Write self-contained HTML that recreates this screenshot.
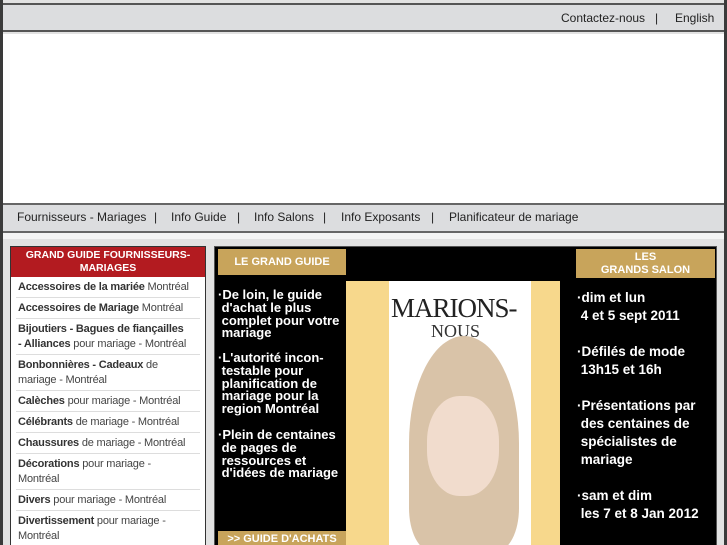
<!DOCTYPE html>
<html><head><meta charset="utf-8"><style>
*{margin:0;padding:0;box-sizing:border-box}
html,body{width:727px;height:545px;overflow:hidden}
body{background:#3a3a3a;font-family:"Liberation Sans",Arial,sans-serif;position:relative}
#page{position:absolute;left:3px;top:0;width:721px;height:545px;background:#e2e2e2;overflow:hidden}
.topline{position:absolute;left:0;top:3px;width:721px;height:2px;background:#555}
.topbar{position:absolute;left:0;top:5px;width:721px;height:27px;background:#dcdddf;border-bottom:2px solid #555;font-size:12px;color:#222}
.topbar span{position:absolute;top:6px}
.banner{position:absolute;left:0;top:34px;width:721px;height:169px;background:#fff}
.nav{position:absolute;left:0;top:203px;width:721px;height:30px;background:#dcdddf;border-top:2px solid #666;border-bottom:2px solid #666;font-size:12px;color:#222}
.nav span{position:absolute;top:5px}
.strip{position:absolute;left:0;top:233px;width:721px;height:6px;background:#f4f4f4}
.left{position:absolute;left:7px;top:246px;width:196px;height:300px;background:#fff;border:1px solid #333}
.lh{background:#b31b20;color:#fff;font-weight:bold;font-size:10.5px;text-align:center;line-height:13px;height:30px;padding-top:2px}
.left ul{list-style:none;padding:0 5px}
.left li{font-size:11px;color:#444;border-bottom:1px solid #ddd;padding:2.5px 0 2.5px 2px;line-height:15px;letter-spacing:-0.2px}
.left b{color:#333}
.right{position:absolute;left:211px;top:246px;width:503px;height:300px;background:#000;border:1px solid #555}
.gold{position:absolute;background:#c8a45b;color:#fff;font-weight:bold;text-align:center}
.txt{position:absolute;color:#fff;font-weight:bold;font-size:13px;line-height:12.8px}
.cover{position:absolute;left:131px;top:34px;width:214px;height:270px;background:#f7d88c}
.cw{position:absolute;left:43px;top:0;width:142px;height:270px;background:#fff}
</style></head><body>
<div id="page">
<div class="topline"></div>
<div class="topbar"><span style="left:558px">Contactez-nous</span><span style="left:652px">|</span><span style="left:672px">English</span></div>
<div class="banner"></div>
<div class="nav"><span style="left:14px">Fournisseurs - Mariages</span><span style="left:151px">|</span><span style="left:168px">Info Guide</span><span style="left:234px">|</span><span style="left:251px">Info Salons</span><span style="left:320px">|</span><span style="left:338px">Info Exposants</span><span style="left:428px">|</span><span style="left:446px">Planificateur de mariage</span></div>
<div class="strip"></div>
<div class="left">
<div class="lh">GRAND GUIDE FOURNISSEURS-<br>MARIAGES</div>
<ul>
<li><b>Accessoires de la mariée</b> Montréal</li>
<li><b>Accessoires de Mariage</b> Montréal</li>
<li><b>Bijoutiers - Bagues de fiançailles<br>- Alliances</b> pour mariage - Montréal</li>
<li><b>Bonbonnières - Cadeaux</b> de<br>mariage - Montréal</li>
<li><b>Calèches</b> pour mariage - Montréal</li>
<li><b>Célébrants</b> de mariage - Montréal</li>
<li><b>Chaussures</b> de mariage - Montréal</li>
<li><b>Décorations</b> pour mariage -<br>Montréal</li>
<li><b>Divers</b> pour mariage - Montréal</li>
<li><b>Divertissement</b> pour mariage -<br>Montréal</li>
</ul>
</div>
<div class="right">
<div class="gold" style="left:3px;top:2px;width:128px;height:26px;font-size:11px;line-height:26px">LE GRAND GUIDE</div>
<div class="txt" style="left:3px;top:42px">·De loin, le guide<br>&nbsp;d'achat le plus<br>&nbsp;complet pour votre<br>&nbsp;mariage</div>
<div class="txt" style="left:3px;top:105px">·L'autorité incon-<br>&nbsp;testable pour<br>&nbsp;planification de<br>&nbsp;mariage pour la<br>&nbsp;region Montréal</div>
<div class="txt" style="left:3px;top:182px">·Plein de centaines<br>&nbsp;de pages de<br>&nbsp;ressources et<br>&nbsp;d'idées de mariage</div>
<div class="gold" style="left:3px;top:284px;width:128px;height:16px;font-size:11px;line-height:16px">&gt;&gt; GUIDE D'ACHATS</div>
<div class="cover"><div class="cw">
<div style="position:absolute;left:2px;top:12px;font-family:'Liberation Serif',serif;font-size:27px;color:#222;letter-spacing:-1px">MARIONS-</div>
<div style="position:absolute;left:42px;top:40px;font-family:'Liberation Serif',serif;font-size:18px;color:#333">NOUS</div>
<div style="position:absolute;left:20px;top:55px;width:110px;height:215px;background:#d9c3a8;border-radius:50% 50% 20% 20%"></div>
<div style="position:absolute;left:38px;top:115px;width:72px;height:100px;background:#f1dccd;border-radius:45%"></div>
</div></div>
<div class="gold" style="left:361px;top:2px;width:139px;height:29px;font-size:11px;line-height:13px;padding-top:2px">LES<br>GRANDS SALON</div>
<div class="txt" style="left:362px;top:42px;line-height:18px;font-size:13.5px">·dim et lun<br>&nbsp;4 et 5 sept 2011<br><br>·Défilés de mode<br>&nbsp;13h15 et 16h<br><br>·Présentations par<br>&nbsp;des centaines de<br>&nbsp;spécialistes de<br>&nbsp;mariage<br><br>·sam et dim<br>&nbsp;les 7 et 8 Jan 2012</div>
</div>
</div>
</body></html>
